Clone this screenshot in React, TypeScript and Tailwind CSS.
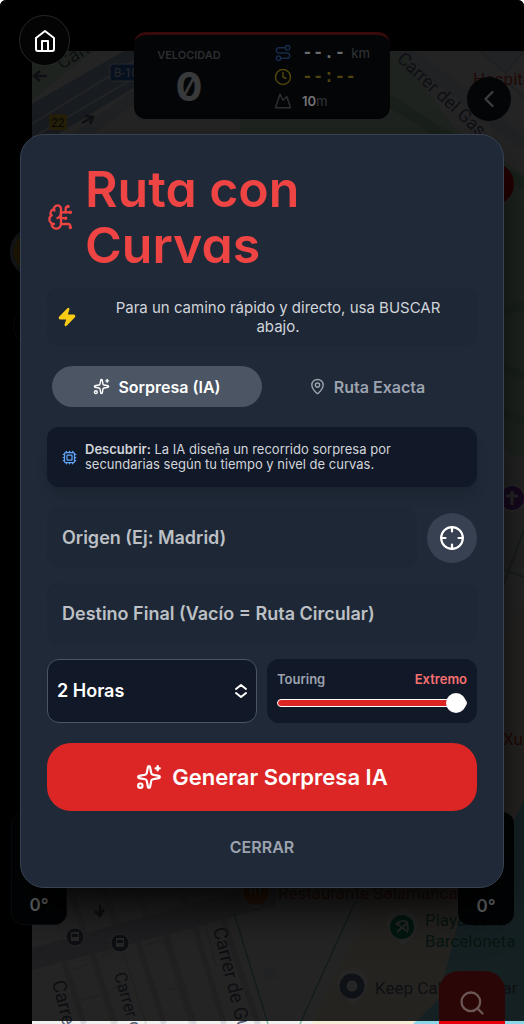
import { useState } from 'react';
import {
  BrainCircuit,
  ChevronLeft,
  Clock,
  Cpu,
  Crosshair,
  MapPin,
  Mountain,
  Route,
  Search,
  Sparkles,
  Zap,
} from 'lucide-react';

function HomeIcon() {
  return (
    <svg className="h-6 w-6" fill="none" viewBox="0 0 24 24" stroke="currentColor" strokeWidth={2} strokeLinecap="round" strokeLinejoin="round">
      <path d="m3 9 9-7 9 7v11a2 2 0 0 1-2 2H5a2 2 0 0 1-2-2z" />
      <path d="M9 22V12h6v10" />
    </svg>
  );
}

// Street map behind the HUD
function StreetMap() {
  return (
    <svg className="absolute left-8 top-[51px] right-0 bottom-0 h-full w-full bg-[#f1f0ef]" aria-hidden="true">
      <g transform="translate(-32 -51)" fontFamily="Roboto, sans-serif">
        {/* park and motorway */}
        <path d="M32 51h62L32 100z" fill="#cfe6cf" />
        <path d="M32 104 124 51h70L32 150z" fill="#9fb2cf" />
        <path d="M32 124 150 51M32 138 180 51" stroke="#dfe6f0" strokeWidth="2" />
        <path d="M60 150 130 100l60-30" stroke="#d5dae2" strokeWidth="12" fill="none" />
        <path d="M240 51h160l60 85H240z" fill="#cfe6d2" />
        <path d="M390 85 524 175v300l-40-60V150z" fill="#c8e6cf" />
        <path d="M340 70 524 185" stroke="#a6d6b2" strokeWidth="12" />
        <path d="M400 45 524 145" stroke="#dbe0e6" strokeWidth="14" />
        <path d="M480 51l26 22 18-22zM510 84l14 14" fill="#e4e8ef" stroke="#ccd4e0" strokeWidth="2" />
        <path d="M490 315 524 305M490 362l34 14M490 406l34 16" stroke="#a9d8b5" strokeWidth="9" />

        {/* right side streets */}
        <path d="M490 460 524 455v110l-34 30z" fill="#e6e6e6" />
        <path d="M524 530l-34 90M490 565l34 12" stroke="#a3c2c0" strokeWidth="2" />
        <path d="M524 600 490 660v360h34z" fill="#f3ecd9" />

        {/* avenue and city blocks */}
        <path d="M64 870l26 80M98 870l18 55M130 870l18 50M174 870l14 40" stroke="#d6dade" strokeWidth="7" />
        <path d="M64 962l20 62M92 952l23 72M138 942l26 82M166 934l28 90M194 924l30 100M222 916l36 108" stroke="#d3d7dc" strokeWidth="6" />
        <path d="M32 948 276 880v26L32 970z" fill="#cdd2d9" />
        <path d="M72 970l20-8 20 62M102 955l20-8 24 77M146 945l18-5 26 84M206 928l10 38 16-6M170 990l18-6M82 1000l18-5M112 988l18-5" stroke="#dddad6" strokeWidth="2" fill="none" />
        <path d="M234 913 268 1024M356 900 300 1024" stroke="#7fbda2" strokeWidth="1.5" fill="none" />
        <path d="M262 970l12-5 3 12-12 5z" fill="#dfe3ec" />

        {/* beach and sea */}
        <path d="M366 885h158v139H312l50-100z" fill="#f5ecd6" />
        <path d="M524 800l-20 40-40 60-26 100-25 24h111z" fill="#8fd6e8" />

        <g fill="#5b6478" fontSize="19">
          <text transform="translate(62 70) rotate(-32)">Carrer</text>
          <text transform="translate(396 60) rotate(43)" fontSize="18" fill="#5d6a8a">Carrer del Gas</text>
          <text transform="translate(52 982) rotate(76)">Carrer de</text>
          <text transform="translate(114 974) rotate(74)" fontSize="17">Carrer de</text>
          <text transform="translate(213 929) rotate(76)">Carrer de Guitert</text>
        </g>
        <path d="M47 76H35m5-5-6 5 6 5M82 123l11-6m-8-1 8 1-3 7M100 905v10m-5-4 5 5 4-7" stroke="#5b6478" strokeWidth="2.5" fill="none" />

        <rect x="110" y="64" width="50" height="17" rx="3" fill="#2f6fd0" stroke="#fff" />
        <text x="114" y="77" fontSize="12" fill="#fff">B-10</text>
        <rect x="49" y="114" width="18" height="16" rx="2" fill="#f9cf3c" />
        <text x="51" y="127" fontSize="12" fill="#333">22</text>

        <g fontSize="17">
          <text x="473" y="85" fill="#d23b32">Hospital</text>
          <text x="503" y="745" fill="#d23b32">Xup</text>
          <text x="278" y="899" fill="#d0502a">Restaurante Salamanca</text>
          <text x="425" y="926" fill="#2f8a70">Playa de la</text>
          <text x="425" y="947" fill="#2f8a70">Barceloneta</text>
          <text x="375" y="994" fill="#5b6478">Keep Calm Playbar</text>
        </g>

        {/* bus stops */}
        {[[75, 937], [120, 943]].map(([x, y]) => (
          <g key={x} transform={`translate(${x} ${y})`}>
            <circle r="9" fill="#566478" stroke="#fff" />
            <path d="M-4-5h8v9h-8z" fill="#fff" />
            <path d="M-3-3h6v3h-6z" fill="#566478" />
          </g>
        ))}

        {/* place pins */}
        <path d="M241 888a15 15 0 0 0 5 12l10 8 10-8a15 15 0 0 0 4-12z" fill="#fff" />
        <circle cx="256" cy="892" r="13" fill="#f08127" />
        <path d="M251 886v8m4-8v8m5-8v8" stroke="#fff" strokeWidth="2" />
        <path d="M388 928a15 15 0 1 1 29 0c-2 8-9 11-14 18-5-7-13-10-15-18z" fill="#fff" />
        <circle cx="402" cy="927" r="12" fill="#12946a" />
        <path d="M396 925a8 8 0 0 1 11-3l1 8M397 932l10-9M396 923l12 9" stroke="#fff" strokeWidth="2" fill="none" />
        <path d="M338 987a15 15 0 1 1 29 0c-2 8-9 11-14 18-5-7-13-10-15-18z" fill="#fff" />
        <circle cx="352" cy="986" r="9" fill="#fff" stroke="#62728c" strokeWidth="7" />
        <circle cx="512" cy="498" r="13" fill="#8a3fc4" stroke="#fff" strokeWidth="2" />
        <path d="M512 491v14m-6-9h12" stroke="#fff" strokeWidth="3" />
      </g>
    </svg>
  );
}

function SpeedPanel() {
  return (
    <div className="absolute left-1/2 top-8 flex h-[87px] w-64 -translate-x-1/2 justify-between rounded-xl border-t-[3px] border-[#390a0c] bg-[#030507] px-5 pt-2">
      <div className="w-[70px] text-center text-[#2c2e31]">
        <div className="text-[11px] leading-6 font-semibold">VELOCIDAD</div>
        <div className="text-[40px] leading-10 font-bold text-[#38393b] slashed-zero">0</div>
      </div>
      <div className="flex w-24 flex-col gap-1 text-[13px] leading-5 font-medium whitespace-nowrap">
        <div className="flex items-center gap-2.5 text-[#2c2e31]">
          <Route className="h-[18px] w-[18px] shrink-0 text-[#172a49]" />
          <span className="flex gap-1.5"><b className="font-['Liberation_Mono',monospace] text-lg leading-5 text-[#6b6b6b]">--.-</b>km</span>
        </div>
        <div className="flex items-center gap-2.5 text-[#51430b]">
          <Clock className="h-[18px] w-[18px] shrink-0" />
          <b className="font-['Liberation_Mono',monospace] text-lg leading-5">--:--</b>
        </div>
        <div className="flex items-center gap-2.5 text-[#2c2e31]">
          <Mountain className="h-[18px] w-[18px] shrink-0" />
          <span><b className="font-semibold text-[#747474]">10</b>m</span>
        </div>
      </div>
    </div>
  );
}

export default function App() {
  const [mode, setMode] = useState<'surprise' | 'exact'>('surprise');
  const [hours, setHours] = useState('2');
  const [curves, setCurves] = useState(100);

  const tabClass = (active: boolean) =>
    active ? 'bg-[#4b5563] text-white' : 'text-[#9ca3af]';

  return (
    <div className="min-h-screen bg-white font-[Inter,sans-serif]">
      <div className="relative min-h-screen overflow-hidden rounded-t-md bg-black">
        <StreetMap />

        <div className="absolute left-[10px] top-[226px] h-[52px] w-[52px] rounded-full border-4 border-gray-400 bg-yellow-500"></div>
        <div className="absolute left-[13px] top-[305px] h-[42px] w-[42px] rounded-full border border-gray-600 bg-black"></div>
        <div className="absolute right-[10px] top-[163px] h-[42px] w-[42px] rounded-full bg-red-600"></div>

        {/* Dimming backdrop */}
        <div className="absolute inset-x-0 top-0 bottom-[3px] bg-black/85"></div>

        <SpeedPanel />
        <button type="button" aria-label="Volver" className="absolute right-[13px] top-[77px] flex h-11 w-11 items-center justify-center rounded-full bg-[#040506] text-[#3c3d3e]">
          <ChevronLeft className="h-7 w-7" />
        </button>
        <div className="absolute left-[11px] bottom-[99px] flex h-[113px] w-14 items-end justify-center rounded-xl border border-[#0b0c0e] bg-[#020304] pb-1.5 text-[17px] font-semibold text-[#67686a]">0°</div>
        <div className="absolute right-[10px] bottom-[99px] flex h-[113px] w-14 items-end justify-center rounded-xl bg-[#020304] pb-1.5 text-[17px] font-semibold text-[#67686a]">0°</div>
        <button type="button" aria-label="Buscar" className="absolute right-[19px] bottom-0 flex h-[53px] w-[66px] justify-center rounded-t-[20px] border-b-[3px] border-red-600 bg-[#2b0606] pt-[18px] text-[#6b5656]">
          <Search className="h-7 w-7" />
        </button>
        <button type="button" aria-label="Inicio" className="absolute left-[19px] top-[15px] flex h-[51px] w-[51px] items-center justify-center rounded-full border border-[#26272a] bg-[#040404] text-white">
          <HomeIcon />
        </button>

        {/* Route dialog */}
        <div className="relative px-5 pt-[134px] pb-[136px]">
          <div role="dialog" aria-labelledby="route-title" className="mx-auto flex max-w-lg flex-col gap-[15px] rounded-3xl border border-[#374151] bg-[#1f2937] p-[26px] shadow-2xl shadow-black">
            <div className="flex items-center gap-[10px] text-[#ef4444]">
              <BrainCircuit className="h-7 w-7 shrink-0" />
              <h2 id="route-title" className="text-[50px] leading-14 font-semibold [font-feature-settings:'cv11']">
                Ruta con
                <br />
                Curvas
              </h2>
            </div>

            <div className="flex items-center gap-3 rounded-xl bg-[#1e2735] p-[10px]">
              <Zap className="h-5 w-5 shrink-0 fill-current text-[#facc15]" />
              <p className="flex-1 px-5 text-center text-[15px] leading-[19px] text-[#d1d5db]">Para un camino rápido y directo, usa BUSCAR abajo.</p>
            </div>

            <div className="grid grid-cols-2 p-[5px] text-base font-semibold">
              <button
                type="button"
                onClick={() => setMode('surprise')}
                className={`flex h-[41px] items-center justify-center gap-2 rounded-full ${tabClass(mode === 'surprise')}`}
              >
                <Sparkles className="h-[17px] w-[17px]" />
                Sorpresa (IA)
              </button>
              <button
                type="button"
                onClick={() => setMode('exact')}
                className={`flex h-[41px] items-center justify-center gap-2 rounded-full ${tabClass(mode === 'exact')}`}
              >
                <MapPin className="h-[17px] w-[17px]" />
                Ruta Exacta
              </button>
            </div>

            <div className="flex items-center gap-2 rounded-xl bg-[#111827] p-[15px] shadow-lg">
              <Cpu className="h-[15px] w-[15px] shrink-0 text-[#60a5fa]" />
              <p className="pr-8 text-[13px] leading-[15px] text-[#d1d5db]">
                <strong className="font-semibold">Descubrir:</strong> La IA diseña un recorrido sorpresa por secundarias según tu tiempo y nivel de curvas.
              </p>
            </div>

            <div className="mt-[5px] flex items-center gap-[10px]">
              <input
                type="text"
                aria-label="Origen"
                placeholder="Origen (Ej: Madrid)"
                className="h-[61px] min-w-0 flex-1 rounded-xl bg-[#1e2735] px-[15px] text-lg font-semibold text-white placeholder:text-[#bcc0c5]"
              />
              <button type="button" aria-label="Usar mi ubicación" className="flex h-[50px] w-[50px] items-center justify-center rounded-full bg-[#374151] text-white">
                <Crosshair className="h-[26px] w-[26px]" />
              </button>
            </div>

            <input
              type="text"
              aria-label="Destino final"
              placeholder="Destino Final (Vacío = Ruta Circular)"
              className="h-[61px] w-full rounded-xl bg-[#1e2735] px-[15px] text-lg font-semibold text-white placeholder:text-[#bcc0c5]"
            />

            <div className="grid grid-cols-2 gap-[10px]">
              <div className="relative">
                <select
                  aria-label="Duración"
                  value={hours}
                  onChange={(e) => setHours(e.target.value)}
                  className="h-16 w-full appearance-none rounded-xl border border-[#4b5563] bg-[#111827] px-[9px] text-lg font-semibold text-white"
                >
                  <option value="1">1 Hora</option>
                  <option value="2">2 Horas</option>
                  <option value="3">3 Horas</option>
                </select>
                <svg className="pointer-events-none absolute right-2 top-6 h-4 w-4 text-white" viewBox="0 0 16 16" fill="none" stroke="currentColor" strokeWidth={2} strokeLinecap="round" strokeLinejoin="round">
                  <path d="M3 6l5-4 5 4M3 10l5 4 5-4" />
                </svg>
              </div>
              <div className="h-16 rounded-xl bg-[#111827] p-[10px]">
                <label htmlFor="curves" className="flex justify-between text-[13px] leading-5 font-semibold text-[#9ca3af]">
                  <span>Touring</span>
                  <span className="text-[#f87171]">Extremo</span>
                </label>
                <input
                  id="curves"
                  type="range"
                  min={0}
                  max={100}
                  value={curves}
                  onChange={(e) => setCurves(Number(e.target.value))}
                  className="mt-[10px] block h-2 w-full appearance-none rounded-full border border-white bg-[#dc2626] [&::-webkit-slider-thumb]:h-5 [&::-webkit-slider-thumb]:w-5 [&::-webkit-slider-thumb]:appearance-none [&::-webkit-slider-thumb]:rounded-full [&::-webkit-slider-thumb]:bg-white"
                />
              </div>
            </div>

            <button type="button" className="mt-[5px] flex h-[68px] items-center justify-center gap-[10px] rounded-3xl bg-[#dc2626] text-[22px] font-semibold text-white">
              <Sparkles className="h-[26px] w-[26px]" />
              Generar Sorpresa IA
            </button>

            <button type="button" className="mt-[7px] self-center px-5 text-base leading-7 font-semibold text-[#9ca3af]">CERRAR</button>
          </div>
        </div>
      </div>
    </div>
  );
}
